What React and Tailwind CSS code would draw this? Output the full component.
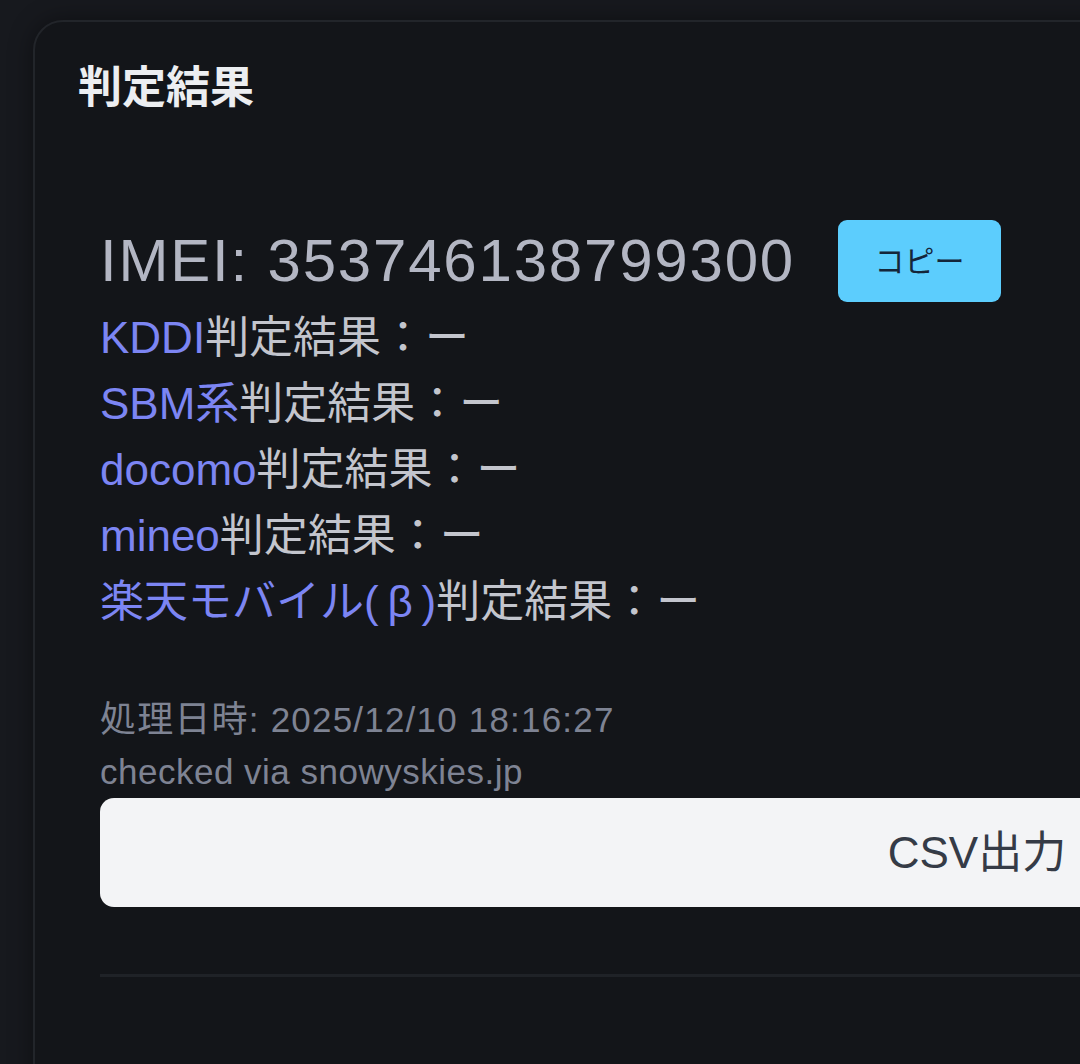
import React from 'react';

const carriers = ['KDDI', 'SBM系', 'docomo', 'mineo', '楽天モバイル(\u2009β\u2009)'];

export default function App() {
  return (
    <div
      className="w-[1080px] h-[1064px] overflow-hidden bg-[#17191e] pt-[20px] pl-[33px]"
      style={{ fontFamily: '"Liberation Sans", "Noto Sans CJK JP", sans-serif' }}
    >
      <div className="w-[2000px] h-[1300px] rounded-[30px] border-2 border-[#22252a] bg-[#131519] pl-[43px] pt-[36px] shadow-[0_0_24px_rgba(0,0,0,0.4)]">
        {/* タイトル */}
        <h2 className="text-[44px] leading-[60px] font-bold text-[#eceef1]">判定結果</h2>

        <div className="pl-[22px]">
          {/* IMEI */}
          <div className="mt-[102px] flex items-center h-[82px]">
            <span className="text-[60px] leading-none tracking-[1.8px] text-[#b3b6c3]">IMEI: 353746138799300</span>
            <button className="ml-[43px] w-[163px] h-[82px] rounded-[9px] bg-[#5ccdfd] text-[30px] text-[#14263a]">
              コピー
            </button>
          </div>

          {/* 判定結果リスト */}
          <div className="mt-[3px]">
            {carriers.map((name) => (
              <div key={name} className="text-[44px] leading-[66px] text-[#c3c5cd]">
                <span className="text-[#7c85f3]">{name}</span>判定結果：ー
              </div>
            ))}
          </div>

          {/* メタ情報 */}
          <div className="mt-[59px] text-[35px] leading-[52px] tracking-[0.5px] text-[#7e8393]">
            <div className="tracking-[1.2px]">
              <span className="text-[36px]">処理日時</span>: 2025/12/10 18:16:27
            </div>
            <div>checked via snowyskies.jp</div>
          </div>

          <button className="w-[1754px] h-[109px] rounded-[14px] bg-[#f3f4f6] text-[44px] text-[#353b46]">
            CSV出力
          </button>

          <div className="mt-[67px] h-[3px] w-[1800px] bg-[#1f2227]" />
        </div>
      </div>
    </div>
  );
}
